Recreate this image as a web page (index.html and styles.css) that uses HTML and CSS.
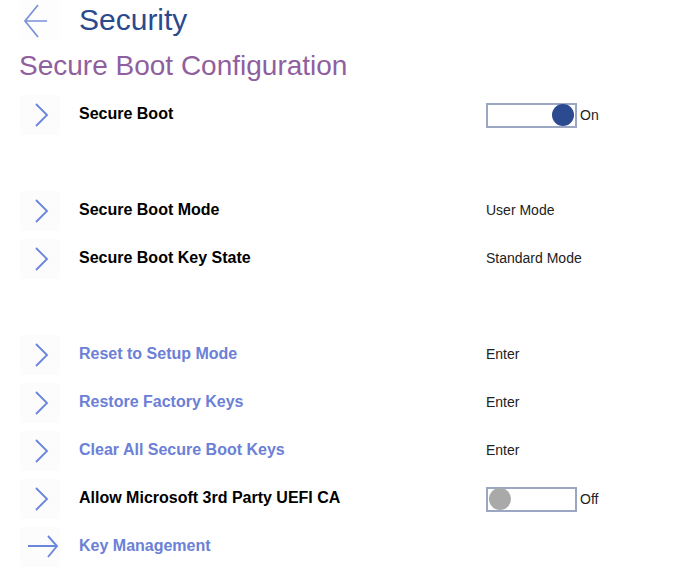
FILE: index.html
```html
<!DOCTYPE html>
<html>
<head>
<meta charset="utf-8">
<link rel="stylesheet" href="styles.css">
</head>
<body>
<div class="page">
  <div class="header">
    <div class="back">
      <svg width="40" height="40" viewBox="0 0 40 40"><path d="M18 5 L5 21 L18 37 M5 21 H27" fill="none" stroke="#7990da" stroke-width="1.7"/></svg>
    </div>
    <h1 class="title">Security</h1>
  </div>
  <h2 class="subtitle">Secure Boot Configuration</h2>

  <div class="list">
    <div class="row">
      <div class="icon"><svg width="40" height="40" viewBox="0 0 40 40"><path d="M16 9 L27 20 L16 31" fill="none" stroke="#6b87dc" stroke-width="1.9"/></svg></div>
      <div class="label">Secure Boot</div>
      <div class="value">
        <div class="toggle on"><span class="knob"></span></div>
        <span class="state">On</span>
      </div>
    </div>
    <div class="row blank"></div>
    <div class="row">
      <div class="icon"><svg width="40" height="40" viewBox="0 0 40 40"><path d="M16 9 L27 20 L16 31" fill="none" stroke="#6b87dc" stroke-width="1.9"/></svg></div>
      <div class="label">Secure Boot Mode</div>
      <div class="value">User Mode</div>
    </div>
    <div class="row">
      <div class="icon"><svg width="40" height="40" viewBox="0 0 40 40"><path d="M16 9 L27 20 L16 31" fill="none" stroke="#6b87dc" stroke-width="1.9"/></svg></div>
      <div class="label">Secure Boot Key State</div>
      <div class="value">Standard Mode</div>
    </div>
    <div class="row blank"></div>
    <div class="row">
      <div class="icon"><svg width="40" height="40" viewBox="0 0 40 40"><path d="M16 9 L27 20 L16 31" fill="none" stroke="#6b87dc" stroke-width="1.9"/></svg></div>
      <div class="label link">Reset to Setup Mode</div>
      <div class="value">Enter</div>
    </div>
    <div class="row">
      <div class="icon"><svg width="40" height="40" viewBox="0 0 40 40"><path d="M16 9 L27 20 L16 31" fill="none" stroke="#6b87dc" stroke-width="1.9"/></svg></div>
      <div class="label link">Restore Factory Keys</div>
      <div class="value">Enter</div>
    </div>
    <div class="row">
      <div class="icon"><svg width="40" height="40" viewBox="0 0 40 40"><path d="M16 9 L27 20 L16 31" fill="none" stroke="#6b87dc" stroke-width="1.9"/></svg></div>
      <div class="label link">Clear All Secure Boot Keys</div>
      <div class="value">Enter</div>
    </div>
    <div class="row">
      <div class="icon"><svg width="40" height="40" viewBox="0 0 40 40"><path d="M16 9 L27 20 L16 31" fill="none" stroke="#6b87dc" stroke-width="1.9"/></svg></div>
      <div class="label">Allow Microsoft 3rd Party UEFI CA</div>
      <div class="value">
        <div class="toggle off"><span class="knob"></span></div>
        <span class="state">Off</span>
      </div>
    </div>
    <div class="row">
      <div class="icon"><svg width="40" height="40" viewBox="0 0 40 40"><path d="M8 19 H37 M28 9 L37 19 L28 30" fill="none" stroke="#6b87dc" stroke-width="1.9"/></svg></div>
      <div class="label link">Key Management</div>
    </div>
  </div>
</div>
</body>
</html>
```

FILE: styles.css
```css
html, body {
  margin: 0;
  padding: 0;
  background: #ffffff;
}

.page {
  font-family: "Liberation Sans", Arial, sans-serif;
  width: 690px;
}

.header {
  display: flex;
  align-items: center;
  height: 40px;
  padding-left: 20px;
}

.back {
  width: 40px;
  height: 40px;
  display: flex;
  background: #fdfdfd;
}

.title {
  margin: 0 0 0 19px;
  font-size: 30px;
  font-weight: normal;
  color: #2b4a8e;
  line-height: 40px;
}

.subtitle {
  margin: 8px 0 0 19px;
  font-size: 28px;
  font-weight: normal;
  color: #905fa0;
  line-height: 36px;
}

.list {
  margin-top: 7px;
  display: flex;
  flex-direction: column;
}

.row {
  display: flex;
  align-items: center;
  height: 48px;
  padding-left: 20px;
}

.icon {
  width: 40px;
  height: 40px;
  background: #fcfcfc;
  display: flex;
}

.label {
  margin-left: 19px;
  width: 407px;
  font-size: 16px;
  font-weight: bold;
  color: #000000;
  margin-top: -3px;
}

.label.link {
  color: #6b80d6;
}

.value {
  display: flex;
  align-items: center;
  font-size: 14px;
  color: #222222;
  margin-top: -2px;
}

.toggle {
  box-sizing: border-box;
  width: 91px;
  height: 25px;
  border: 2px solid #9aa6c2;
  display: flex;
  align-items: center;
  padding: 0 1px;
  margin-top: 2px;
}

.toggle.on {
  justify-content: flex-end;
}

.knob {
  width: 22px;
  height: 22px;
  border-radius: 50%;
}

.toggle.on .knob {
  background: #2b4a8f;
}

.toggle.off .knob {
  background: #a9a9a9;
}

.state {
  margin-left: 3px;
  margin-top: 2px;
}
```
